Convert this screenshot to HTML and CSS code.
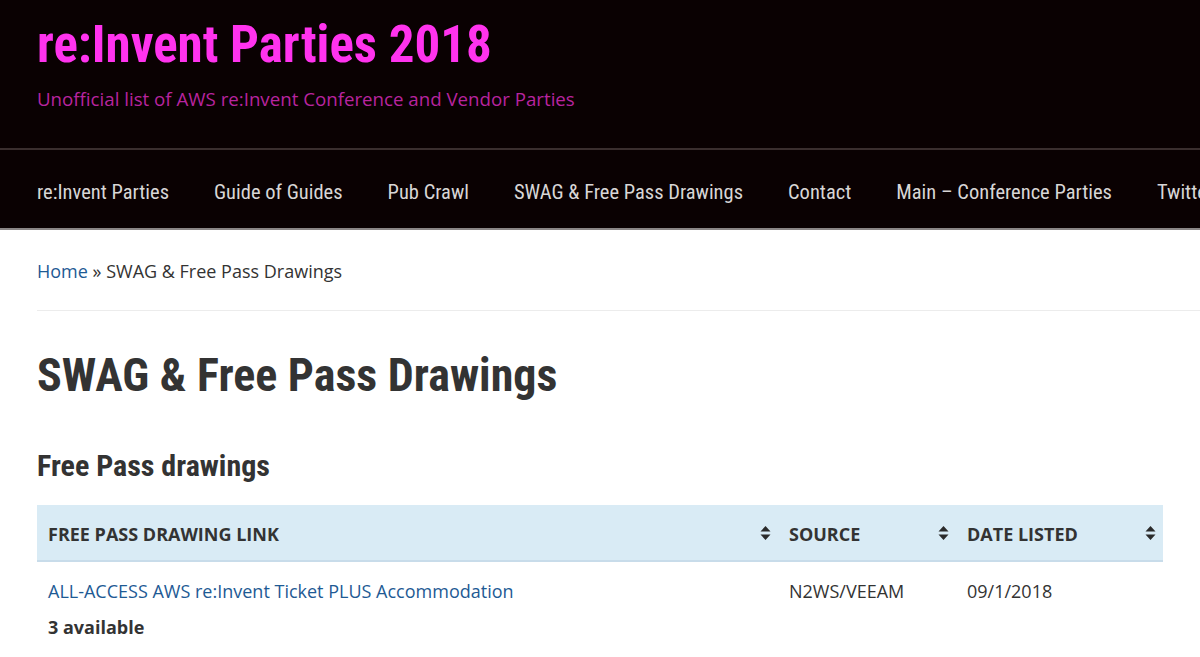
FILE: index.html
```html
<!DOCTYPE html>
<html lang="en">
<head>
<meta charset="utf-8">
<title>SWAG &amp; Free Pass Drawings – re:Invent Parties 2018</title>
<link rel="stylesheet" href="styles.css">
</head>
<body>
<header class="site-header">
  <div class="branding">
    <h1 class="site-title">re:Invent Parties 2018</h1>
    <p class="site-desc">Unofficial list of AWS re:Invent Conference and Vendor Parties</p>
  </div>
  <nav class="main-nav">
    <a href="#">re:Invent Parties</a>
    <a href="#">Guide of Guides</a>
    <a href="#">Pub Crawl</a>
    <a href="#">SWAG &amp; Free Pass Drawings</a>
    <a href="#">Contact</a>
    <a href="#">Main – Conference Parties</a>
    <a href="#">Twitter</a>
  </nav>
</header>
<main class="content">
  <div class="breadcrumb"><a href="#">Home</a> » SWAG &amp; Free Pass Drawings</div>
  <hr class="rule">
  <h1 class="page-title">SWAG &amp; Free Pass Drawings</h1>
  <h2 class="section-title">Free Pass drawings</h2>
  <table class="drawings">
    <thead>
      <tr>
        <th class="c1"><span>Free Pass Drawing Link</span><svg class="sort" viewBox="0 0 10 14"><path d="M5 0 L10 5.5 L0 5.5 Z M0 8.5 L10 8.5 L5 14 Z"/></svg></th>
        <th class="c2"><span>Source</span><svg class="sort" viewBox="0 0 10 14"><path d="M5 0 L10 5.5 L0 5.5 Z M0 8.5 L10 8.5 L5 14 Z"/></svg></th>
        <th class="c3"><span>Date Listed</span><svg class="sort" viewBox="0 0 10 14"><path d="M5 0 L10 5.5 L0 5.5 Z M0 8.5 L10 8.5 L5 14 Z"/></svg></th>
      </tr>
    </thead>
    <tbody>
      <tr>
        <td><a href="#">ALL-ACCESS AWS re:Invent Ticket PLUS Accommodation</a><br><strong>3 available</strong></td>
        <td>N2WS/VEEAM</td>
        <td>09/1/2018</td>
      </tr>
    </tbody>
  </table>
</main>
</body>
</html>
```

FILE: styles.css
```css
html, body {
  margin: 0;
  padding: 0;
  background: #ffffff;
}
body {
  font-family: "Open Sans", "Noto Sans", sans-serif;
  color: #333333;
  overflow: hidden;
}
a {
  color: #1e5a94;
  text-decoration: none;
}
.site-header {
  background: #0a0102;
}
.branding {
  height: 150px;
  box-sizing: border-box;
  padding: 13px 0 0 37px;
  border-bottom: 2px solid #3a2e2e;
}
.site-title {
  margin: 0;
  font-family: "Roboto Condensed", "Liberation Sans Narrow", "Roboto", sans-serif;
  font-stretch: condensed;
  font-weight: 700;
  font-size: 51px;
  line-height: 64px;
  color: #ff33ee;
}
.site-desc {
  margin: 10px 0 0;
  font-size: 18.7px;
  line-height: 24px;
  color: #b8249f;
}
.main-nav {
  height: 73px;
  display: flex;
  align-items: center;
  gap: 45px;
  padding: 5px 0 0 37px;
  white-space: nowrap;
  overflow: hidden;
  border-bottom: 2px solid #8a8686;
}
.main-nav a {
  font-family: "Roboto Condensed", "Liberation Sans Narrow", "Roboto", sans-serif;
  font-stretch: condensed;
  font-weight: 400;
  font-size: 20.5px;
  color: #d8d6d6;
  line-height: 28px;
}
.content {
  padding: 0 0 0 37px;
}
.breadcrumb {
  padding-top: 28px;
  font-size: 18px;
  line-height: 26px;
  color: #333;
}
.rule {
  margin: 26px 0 0;
  border: 0;
  border-top: 1px solid #ececec;
}
.page-title {
  margin: 37px 0 0;
  font-family: "Roboto Condensed", "Liberation Sans Narrow", "Roboto", sans-serif;
  font-stretch: condensed;
  font-weight: 700;
  font-size: 46px;
  line-height: 54px;
  color: #333;
}
.section-title {
  margin: 47px 0 0;
  font-family: "Roboto Condensed", "Liberation Sans Narrow", "Roboto", sans-serif;
  font-stretch: condensed;
  font-weight: 700;
  font-size: 30px;
  line-height: 34px;
  color: #333;
}
.drawings {
  margin-top: 22px;
  width: 1126px;
  border-collapse: collapse;
  font-size: 18px;
}
.drawings th {
  background: #d9ebf5;
  height: 55px;
  padding: 0 11px;
  text-align: left;
  font-weight: 700;
  text-transform: uppercase;
  color: #333;
  border-bottom: 2px solid #c8dcea;
  position: relative;
}
.drawings th span {
  display: inline-block;
  vertical-align: middle;
}
.drawings .sort {
  position: absolute;
  right: 7px;
  top: 21px;
  width: 11px;
  height: 14px;
  fill: #2b2b2b;
}
.drawings .c1 { width: 719px; }
.drawings .c2 { width: 156px; }
.drawings td {
  padding: 11px 11px;
  vertical-align: top;
  line-height: 36px;
  color: #333;
}
.drawings td strong {
  font-weight: 700;
}
```
